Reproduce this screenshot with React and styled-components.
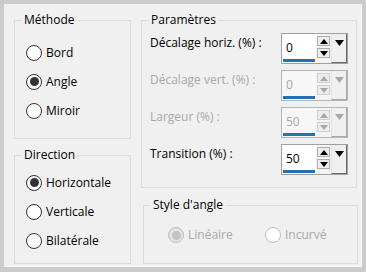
import { createGlobalStyle, styled } from "styled-components";

const methods = [
  { key: "bord", label: "Bord", checked: false },
  { key: "angle", label: "Angle", checked: true },
  { key: "miroir", label: "Miroir", checked: false },
];

const directions = [
  { key: "h", label: "Horizontale", checked: true },
  { key: "v", label: "Verticale", checked: false },
  { key: "b", label: "Bilatérale", checked: false },
];

const params = [
  { key: "dh", label: "Décalage horiz. (%) :", value: "0", disabled: false },
  { key: "dv", label: "Décalage vert. (%) :", value: "0", disabled: true },
  { key: "lg", label: "Largeur (%) :", value: "50", disabled: true },
  { key: "tr", label: "Transition (%) :", value: "50", disabled: false },
];

function Arrow({ up, color }) {
  return (
    <svg width="8" height="5" viewBox="0 0 8 5">
      <polygon points={up ? "0,5 8,5 4,0" : "0,0 8,0 4,5"} fill={color} />
    </svg>
  );
}

function Radio({ label, checked, disabled }) {
  return (
    <StRadioRow $disabled={disabled}>
      <StCircle $checked={checked} $disabled={disabled} />
      <span>{label}</span>
    </StRadioRow>
  );
}

function Spin({ value, disabled }) {
  const color = disabled ? "#a8a8a8" : "#000";
  return (
    <StSpin $disabled={disabled}>
      <StField $disabled={disabled}>
        <StValue $disabled={disabled}>{value}</StValue>
        <StBar />
      </StField>
      <StSpinCol>
        <StSpinBtn $disabled={disabled}>
          <Arrow up color={color} />
        </StSpinBtn>
        <StSpinBtn $disabled={disabled}>
          <Arrow color={color} />
        </StSpinBtn>
      </StSpinCol>
      <StDrop $disabled={disabled}>
        <svg width="9" height="6" viewBox="0 0 9 6">
          <polygon points="0,0 9,0 4.5,6" fill={color} />
        </svg>
      </StDrop>
    </StSpin>
  );
}

export default function App() {
  return (
    <>
      <GlobalStyle />
      <StFrame>
        <StPanel>
          <StColumn>
            <StGroup $h={127}>
              <StLegend>Méthode</StLegend>
              <StRadioList $top={10}>
                {methods.map((m) => (
                  <Radio key={m.key} label={m.label} checked={m.checked} />
                ))}
              </StRadioList>
            </StGroup>
            <StGroup $h={117} $gap={8}>
              <StLegend>Direction</StLegend>
              <StRadioList $top={5}>
                {directions.map((d) => (
                  <Radio key={d.key} label={d.label} checked={d.checked} />
                ))}
              </StRadioList>
            </StGroup>
          </StColumn>

          <StColumn>
            <StGroup $h={176} $w={216}>
              <StLegend>Paramètres</StLegend>
              <StParamList>
                {params.map((p) => (
                  <StParamRow key={p.key}>
                    <StParamLabel $disabled={p.disabled}>{p.label}</StParamLabel>
                    <Spin value={p.value} disabled={p.disabled} />
                  </StParamRow>
                ))}
              </StParamList>
            </StGroup>
            <StGroup $h={67} $w={215} $gap={9} $shift={2}>
              <StLegend>Style d'angle</StLegend>
              <StStyleRow>
                <Radio label="Linéaire" checked disabled />
                <Radio label="Incurvé" disabled />
              </StStyleRow>
            </StGroup>
          </StColumn>
        </StPanel>
      </StFrame>
    </>
  );
}

// styled-components
const GlobalStyle = createGlobalStyle`
  html, body {
    margin: 0;
    padding: 0;
    background: #cbcbcb;
  }
  body {
    font-family: "Open Sans", "Noto Sans", "Liberation Sans", sans-serif;
    font-size: 12px;
    color: #000;
  }
`;

const StFrame = styled.div`
  width: 366px;
  height: 272px;
  box-sizing: border-box;
  padding: 4px 4px 5px 4px;
  background: #cbcbcb;
`;

const StPanel = styled.div`
  height: 100%;
  box-sizing: border-box;
  background: #f0f0f0;
  display: grid;
  grid-template-columns: 117px 217px;
  column-gap: 10px;
  padding: 8px 0 0 10px;
  box-shadow: inset -1px -1px 0 #fafafa;
`;

const StColumn = styled.div`
  display: flex;
  flex-direction: column;
`;

const StGroup = styled.fieldset`
  margin: ${(p) => p.$gap || 0}px 0 0 ${(p) => p.$shift || 0}px;
  padding: 0;
  min-width: 0;
  box-sizing: border-box;
  width: ${(p) => (p.$w ? `${p.$w}px` : "auto")};
  height: ${(p) => p.$h}px;
  border: 1px solid #dcdcdc;
`;

const StLegend = styled.legend`
  margin-left: 7px;
  padding: 0 2px;
  font-size: 12px;
  line-height: 16px;
  color: #000;
`;

const StRadioList = styled.div`
  display: flex;
  flex-direction: column;
  padding: ${(p) => p.$top}px 0 0 11px;
`;

const StRadioRow = styled.div`
  display: flex;
  align-items: center;
  gap: 4px;
  height: 29px;
  line-height: 16px;
  color: ${(p) => (p.$disabled ? "#a8a8a8" : "#000")};
`;

const StCircle = styled.span`
  position: relative;
  flex: none;
  width: 16px;
  height: 16px;
  box-sizing: border-box;
  border-radius: 50%;
  border: 1px solid ${(p) => (p.$disabled ? "#bcbcbc" : "#333")};
  background: ${(p) => (p.$disabled && p.$checked ? "#e4e4e4" : "#fff")};

  &::after {
    content: "";
    display: ${(p) => (p.$checked ? "block" : "none")};
    position: absolute;
    left: 2.5px;
    top: 2.5px;
    width: 9px;
    height: 9px;
    border-radius: 50%;
    background: ${(p) => (p.$disabled ? "#c4c4c4" : "#333")};
  }
`;

const StParamList = styled.div`
  display: flex;
  flex-direction: column;
  gap: 6px;
  padding: 5px 8px 0 8px;
`;

const StParamRow = styled.div`
  display: flex;
  justify-content: space-between;
  align-items: flex-start;
  height: 31px;
`;

const StParamLabel = styled.span`
  padding-top: 2px;
  line-height: 16px;
  color: ${(p) => (p.$disabled ? "#a8a8a8" : "#000")};
`;

const StSpin = styled.div`
  display: flex;
  width: 67px;
  height: 31px;
  box-sizing: border-box;
  border: 1px solid ${(p) => (p.$disabled ? "#b4b4b4" : "#a0a0a0")};
  background: #f4f4f4;
`;

const StField = styled.div`
  width: 34px;
  display: flex;
  flex-direction: column;
  justify-content: flex-end;
  background: ${(p) => (p.$disabled ? "#f7f7f7" : "#fff")};
`;

const StValue = styled.span`
  padding-left: 4px;
  line-height: 16px;
  margin-bottom: 3px;
  color: ${(p) => (p.$disabled ? "#a8a8a8" : "#000")};
`;

const StBar = styled.div`
  height: 3px;
  margin: 0 1px 1px 1px;
  background: #2272b5;
`;

const StSpinCol = styled.div`
  width: 15px;
  display: flex;
  flex-direction: column;
  gap: 2px;
  padding: 2px 1px 0 1px;
  box-sizing: border-box;
`;

const StSpinBtn = styled.div`
  height: 10px;
  display: flex;
  align-items: center;
  justify-content: center;
  box-sizing: border-box;
  border: 1px solid ${(p) => (p.$disabled ? "#cfcfcf" : "#adadad")};
  background: #ececec;
`;

const StDrop = styled.div`
  width: 16px;
  display: flex;
  justify-content: center;
  align-items: flex-start;
  padding-top: 6px;
  box-sizing: border-box;
  background: #f0f0f0;
  border-left: 1px solid #e2e2e2;
  border-right: 1px solid ${(p) => (p.$disabled ? "#a8a8a8" : "#6a6a6a")};
  border-bottom: 1px solid ${(p) => (p.$disabled ? "#a8a8a8" : "#6a6a6a")};
`;

const StStyleRow = styled.div`
  display: grid;
  grid-template-columns: 97px auto;
  padding: 12px 0 0 24px;

  & > div {
    height: 20px;
  }
`;
